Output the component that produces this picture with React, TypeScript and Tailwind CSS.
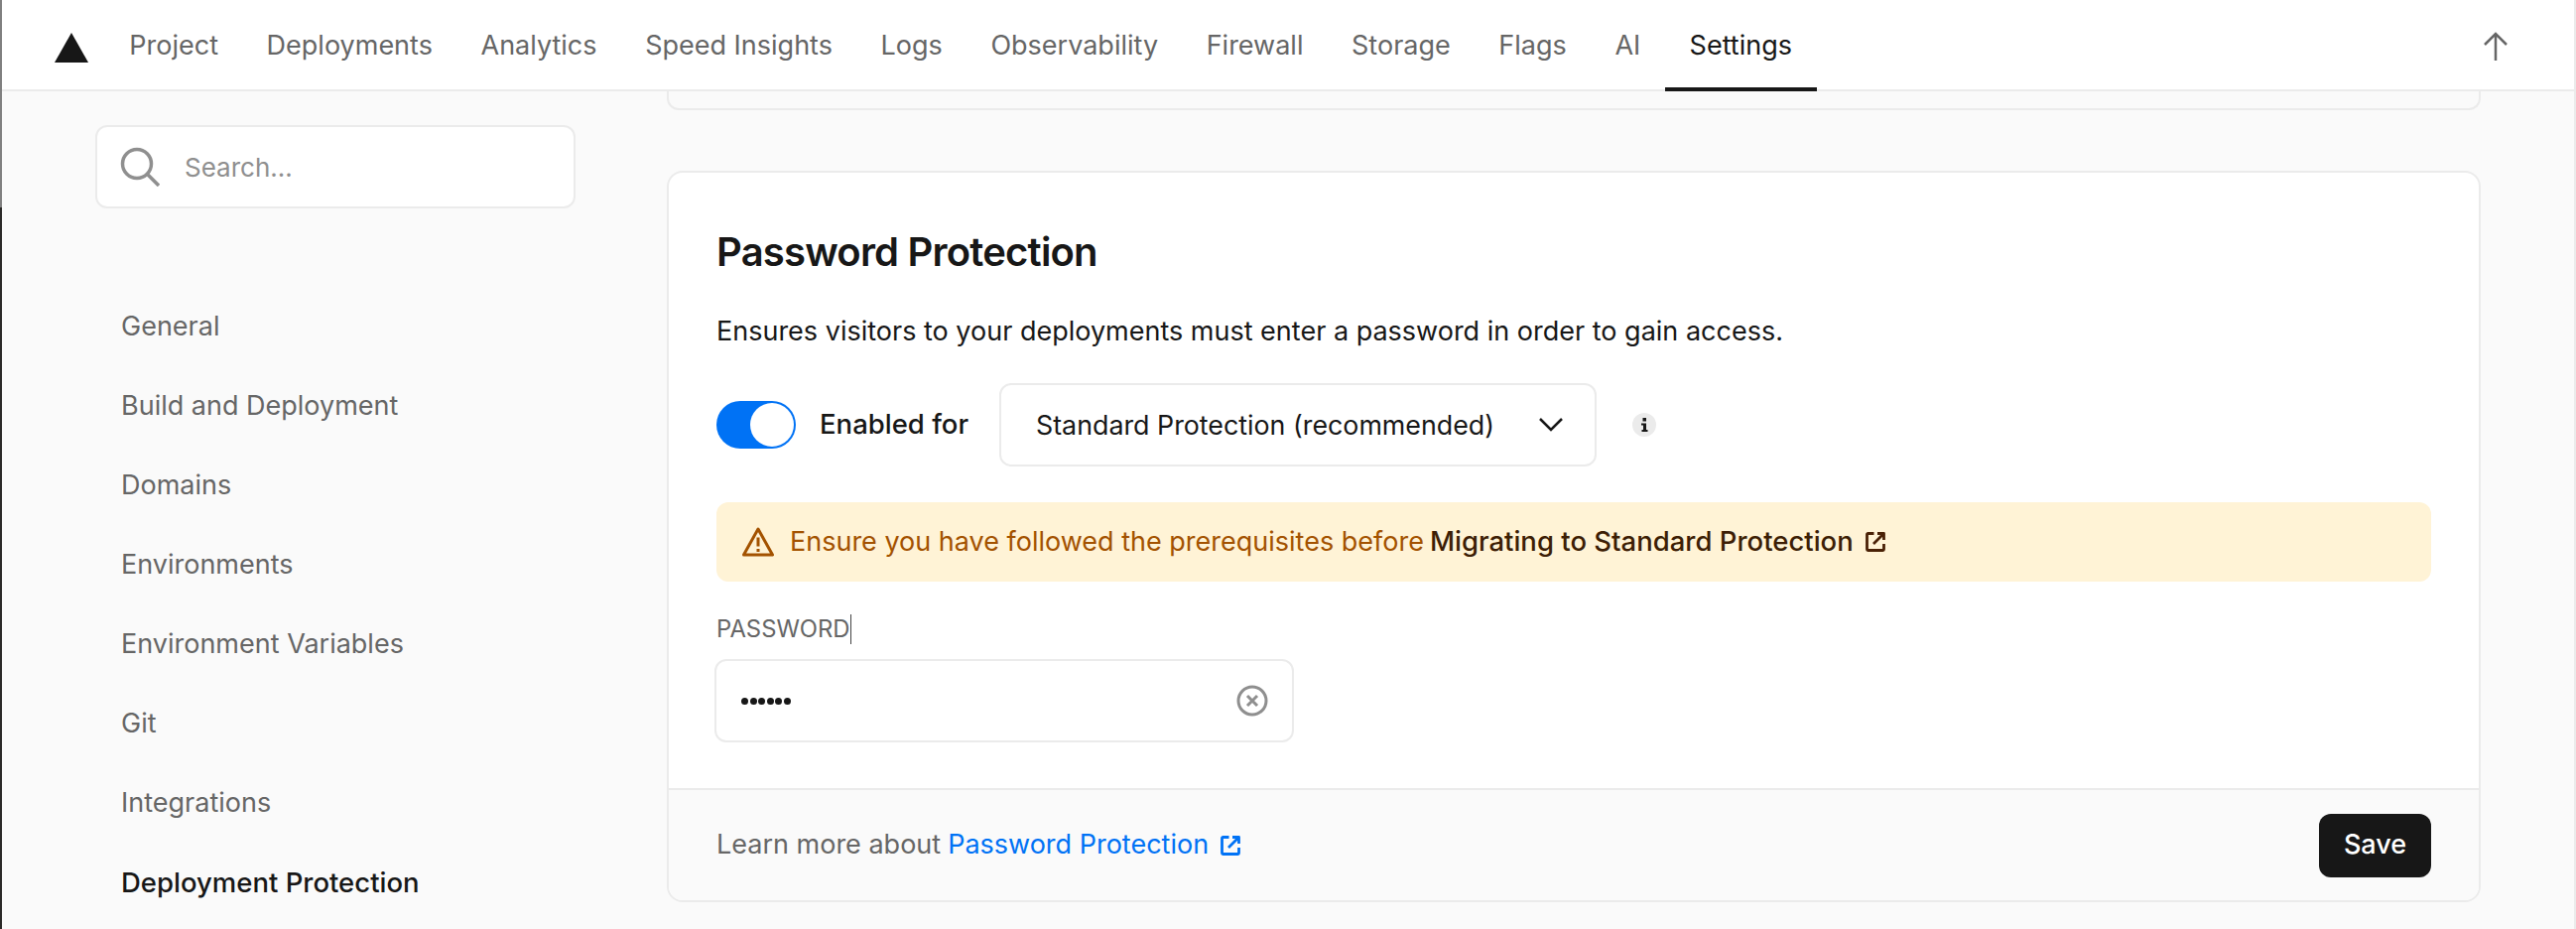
import React from "react";

const navItems = ["Project", "Deployments", "Analytics", "Speed Insights", "Logs", "Observability", "Firewall", "Storage", "Flags", "AI"];
const sideItems = ["General", "Build and Deployment", "Domains", "Environments", "Environment Variables", "Git", "Integrations"];

function ExternalIcon({ className }: { className: string }) {
  return (
    <svg viewBox="0 0 20 20" className={className} fill="none" stroke="currentColor" strokeWidth="2.800" strokeLinejoin="round">
      <path d="M8.500 1.500H2.500a1 1 0 0 0-1 1v15a1 1 0 0 0 1 1h15a1 1 0 0 0 1-1V12" />
      <path d="M8 12L17 3M12 1.500h6.500V8" />
    </svg>
  );
}

export default function App() {
  return (
    <div className="h-[936px] w-[2596px] overflow-hidden flex bg-[#fafafa] font-['Inter',sans-serif] text-[#171717]">
      <div className="w-[2px] shrink-0 flex flex-col">
        <div className="h-[209px] bg-[#808080]"></div>
        <div className="flex-1 bg-[#2b2a28]"></div>
      </div>
      <div className="flex-1 min-w-0 flex flex-col border-r-2 border-r-[#ebebeb]">
        <nav className="h-[92px] shrink-0 bg-white border-b-2 border-[#ebebeb] flex items-stretch">
          <div className="w-[104px] shrink-0 pl-[53px] pt-[33px]">
            <svg viewBox="0 0 34 30" className="w-[34px] h-[30px]"><path d="M17 0L34 30H0Z" fill="#171717" /></svg>
          </div>
          <div className="flex items-stretch">
            {navItems.map((n) => (
              <a key={n} className="px-[24.300px] text-[27px] leading-[92px] text-[#666666]">{n}</a>
            ))}
            <a className="px-[25px] text-[27px] leading-[92px] text-[#171717] border-b-4 border-[#171717] -mb-[2px] h-[92px]">Settings</a>
          </div>
          <div className="ml-auto pr-[64px] pt-[32px]">
            <svg viewBox="0 0 30 30" className="w-[30px] h-[30px]" fill="none" stroke="#666666" strokeWidth="2.500"><path d="M15 29V2M4 13L15 2l11 11" /></svg>
          </div>
        </nav>
        <div className="flex flex-1 min-h-0">
          <aside className="w-[670px] shrink-0 pl-[94px] pt-[34px]">
            <div className="w-[484px] h-[84px] bg-white border-2 border-[#ebebeb] rounded-[12px] flex items-center pl-[23px] gap-[25px]">
              <svg viewBox="0 0 40 40" className="w-[40px] h-[40px]" fill="none" stroke="#8f8f8f" strokeWidth="3.500"><circle cx="17" cy="17" r="14.500" /><path d="M27.500 27.500L39 39" /></svg>
              <span className="text-[26px] text-[#8f8f8f]">Search...</span>
            </div>
            <ul className="mt-[79px] ml-[26px] flex flex-col">
              {sideItems.map((s) => (
                <li key={s} className="h-[80px] leading-[80px] text-[27px] text-[#666666]">{s}</li>
              ))}
              <li className="h-[80px] leading-[80px] text-[27.500px] font-medium text-[#171717]">Deployment Protection</li>
            </ul>
          </aside>
          <main className="w-[1828px] shrink-0">
            <div className="h-[19px] border-2 border-t-0 border-[#ebebeb] rounded-b-[12px]"></div>
            <section className="mt-[61px] h-[737px] bg-white border-2 border-[#ebebeb] rounded-[16px] flex flex-col overflow-hidden">
              <div className="flex-1 px-[48px] pt-[50px]">
                <h2 className="text-[40px] leading-[60px] font-semibold tracking-[-0.8px]">Password Protection</h2>
                <p className="mt-[30px] text-[27px] leading-[40px]">Ensures visitors to your deployments must enter a password in order to gain access.</p>
                <div className="mt-[32px] flex items-center h-[84px]">
                  <div className="w-[80px] h-[48px] rounded-full bg-[#0072f5] flex items-center justify-end pr-[2px]">
                    <div className="w-[44px] h-[44px] rounded-full bg-white"></div>
                  </div>
                  <span className="ml-[24px] w-[150px] text-[27.500px] font-medium whitespace-nowrap">Enabled for</span>
                  <div className="ml-[31px] w-[602px] h-[84px] border-2 border-[#ebebeb] rounded-[12px] flex items-center justify-between pl-[35px] pr-[32px]">
                    <span className="text-[26.800px]">Standard Protection (recommended)</span>
                    <svg viewBox="0 0 24 14" className="w-[24px] h-[14px]" fill="none" stroke="#171717" strokeWidth="2.500"><path d="M1 1l11 11L23 1" /></svg>
                  </div>
                  <div className="ml-[36px] w-[24px] h-[24px] rounded-full bg-[#ebebeb] flex items-center justify-center">
                    <svg viewBox="0 0 12 14" className="w-[12px] h-[14px]" fill="#171717"><rect x="4.500" y="0" width="3.500" height="3.500" /><path d="M3 5.500h5V12h1.500v2h-6v-2H5V7.500H3z" /></svg>
                  </div>
                </div>
                <div className="mt-[36px] h-[80px] bg-[#fff3d6] rounded-[12px] flex items-center pl-[26px]">
                  <svg viewBox="0 0 32 30" className="w-[32px] h-[30px]" fill="none" stroke="#a35200" strokeWidth="3" strokeLinejoin="round"><path d="M16 2L30.500 28H1.500Z" /><path d="M16 10.500v9M16 22v3" /></svg>
                  <span className="ml-[16px] text-[27px] text-[#a35200]">Ensure you have followed the prerequisites before</span>
                  <span className="ml-[6px] text-[27.500px] font-medium text-[#3d1e05]">Migrating to Standard Protection</span>
                  <ExternalIcon className="ml-[12px] w-[20px] h-[20px] text-[#4a2106]" />
                </div>
                <div className="mt-[32px] flex items-center h-[32px]">
                  <span className="text-[23.800px] text-[#666666]">PASSWORD</span>
                  <span className="w-[1px] h-[30px] bg-[#444444]"></span>
                </div>
                <div className="-ml-[2px] mt-[14px] w-[584px] h-[84px] border-2 border-[#ebebeb] rounded-[12px] flex items-center justify-between pl-[25px] pr-[24px]">
                  <div className="flex gap-[1.500px]">
                    {[0, 1, 2, 3, 4, 5].map((i) => (
                      <span key={i} className="w-[7px] h-[7px] rounded-full bg-[#171717]"></span>
                    ))}
                  </div>
                  <svg viewBox="0 0 32 32" className="w-[32px] h-[32px]" fill="none" stroke="#8f8f8f" strokeWidth="3"><circle cx="16" cy="16" r="14" /><path d="M11 11l10 10M21 11L11 21" /></svg>
                </div>
              </div>
              <div className="h-[113px] shrink-0 border-t-2 border-[#ebebeb] bg-[#fafafa] flex items-center justify-between px-[48px]">
                <div className="flex items-center text-[27px]">
                  <span className="text-[#666666]">Learn more about</span>
                  <span className="ml-[7px] text-[#0072f5]">Password Protection</span>
                  <ExternalIcon className="ml-[12px] w-[20px] h-[20px] text-[#0072f5]" />
                </div>
                <button className="w-[113px] h-[64px] bg-[#171717] text-white rounded-[12px] text-[27px] font-medium">Save</button>
              </div>
            </section>
          </main>
        </div>
      </div>
    </div>
  );
}
